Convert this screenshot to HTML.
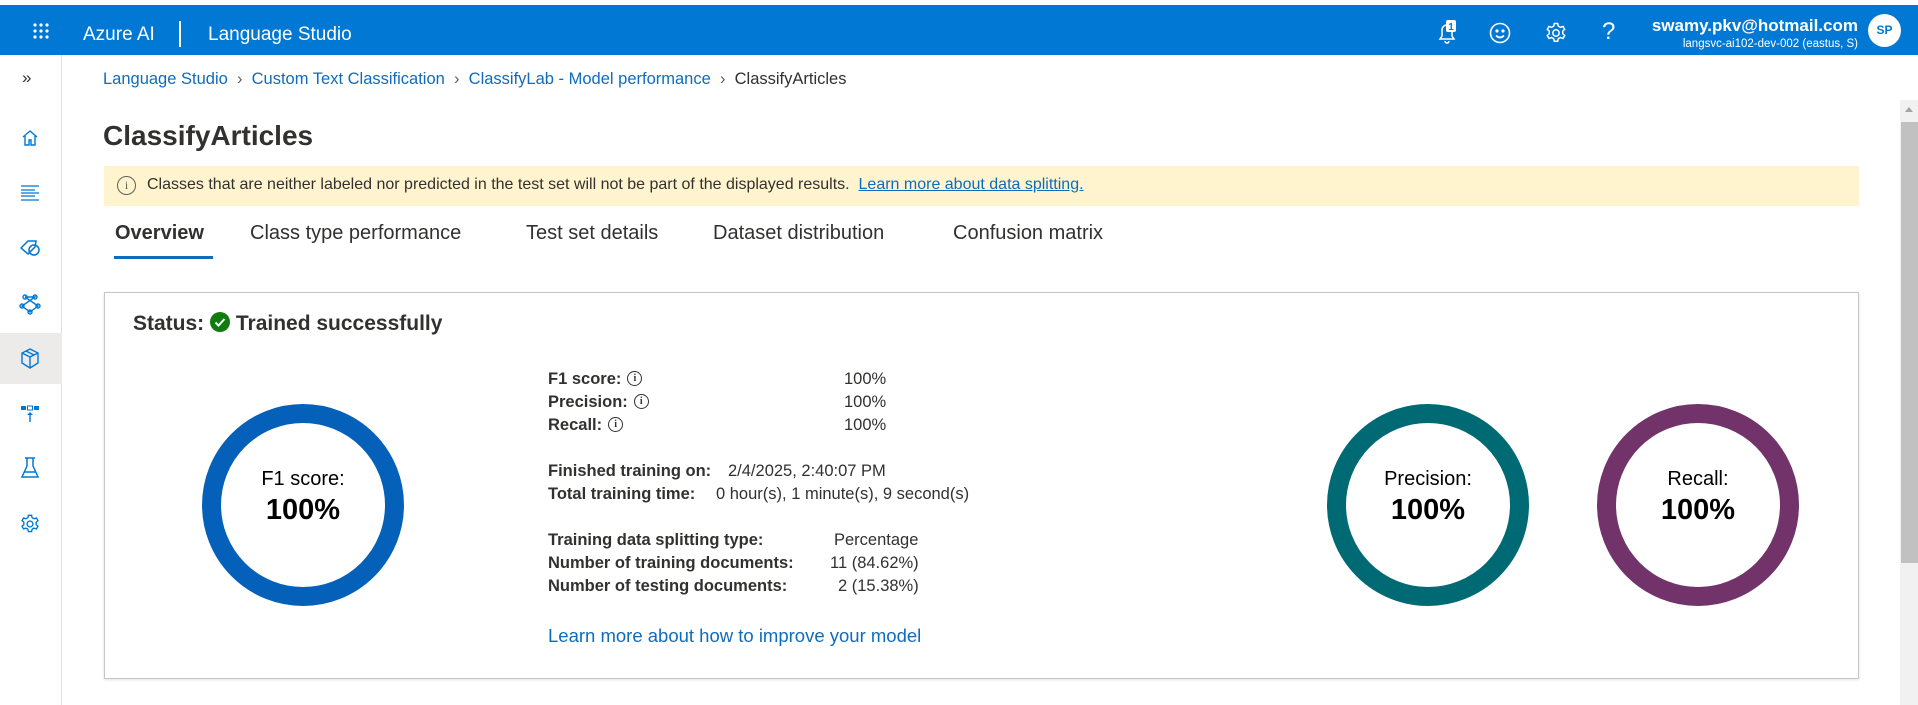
<!DOCTYPE html>
<html><head><meta charset="utf-8"><style>
*{margin:0;padding:0;box-sizing:border-box}
body{width:1918px;height:705px;overflow:hidden;background:#fff;font-family:"Liberation Sans",sans-serif;color:#323130;position:relative}
.a{position:absolute;white-space:nowrap}
.hdr{position:absolute;left:0;top:5px;width:1918px;height:50px;background:#0078d4;color:#fff}
.lnk{color:#0f6cbd}
.side{position:absolute;left:0;top:55px;width:62px;height:650px;border-right:1px solid #e1dfdd;background:#fff}
.card{position:absolute;left:104px;top:292px;width:1755px;height:387px;border:1px solid #c8c6c4;box-shadow:0 1px 3px rgba(0,0,0,.12)}
.st{font-size:16.5px;color:#323130}
.b{font-weight:bold;color:#323130}
.info{display:inline-block;width:15px;height:15px;border:1.3px solid #323130;border-radius:50%;font-size:10px;text-align:center;line-height:13px;vertical-align:3px;margin-left:6px;font-family:"Liberation Serif",serif}
.ct{text-align:center;width:200px;font-family:"Liberation Sans",sans-serif;color:#000}
</style></head><body>
<div class="hdr">
 <svg class="a" style="left:32px;top:17px" width="18" height="18" viewBox="0 0 18 18" fill="#fff"><circle cx="3" cy="3" r="1.6"/><circle cx="9" cy="3" r="1.6"/><circle cx="15" cy="3" r="1.6"/><circle cx="3" cy="9" r="1.6"/><circle cx="9" cy="9" r="1.6"/><circle cx="15" cy="9" r="1.6"/><circle cx="3" cy="15" r="1.6"/><circle cx="9" cy="15" r="1.6"/><circle cx="15" cy="15" r="1.6"/></svg>
 <div class="a" style="left:83px;top:19px;font-size:19px">Azure AI</div>
 <div class="a" style="left:179px;top:16px;width:2px;height:26px;background:#fff"></div>
 <div class="a" style="left:208px;top:19px;font-size:19px">Language Studio</div>
 <svg class="a" style="left:1434px;top:14px" width="26" height="26" viewBox="0 0 26 26" fill="none" stroke="#fff" stroke-width="1.5"><path d="M6 20h14l-2-3v-6a5 5 0 0 0-10 0v6z"/><path d="M11 22a2 2 0 0 0 4 0"/><rect x="12" y="1" width="10" height="12" rx="2" fill="#fff" stroke="none"/><text x="17" y="11" font-size="10" fill="#0078d4" stroke="none" text-anchor="middle" font-family="Liberation Sans" font-weight="bold">1</text></svg>
 <svg class="a" style="left:1488px;top:16px" width="24" height="24" viewBox="0 0 24 24" fill="none" stroke="#fff" stroke-width="1.6"><circle cx="12" cy="12" r="9.5"/><circle cx="9" cy="10" r=".8" fill="#fff"/><circle cx="15" cy="10" r=".8" fill="#fff"/><path d="M8 14.5q4 4 8 0"/></svg>
 <svg class="a" style="left:1544px;top:16px" width="24" height="24" viewBox="0 0 24 24" fill="none" stroke="#fff" stroke-width="1.5"><circle cx="12" cy="12" r="3.2"/><path d="M10.3 2.5h3.4l.6 2.6 2.2 1.2 2.5-.9 1.7 2.9-2 1.8v2.6l2 1.8-1.7 2.9-2.5-.9-2.2 1.2-.6 2.6h-3.4l-.6-2.6-2.2-1.2-2.5.9-1.7-2.9 2-1.8v-2.6l-2-1.8 1.7-2.9 2.5.9 2.2-1.2z"/></svg>
 <div class="a" style="left:1602px;top:13px;font-size:24px;font-weight:300">?</div>
 <div class="a" style="right:60px;top:11px;font-size:17px;font-weight:bold;text-align:right">swamy.pkv@hotmail.com</div>
 <div class="a" style="right:60px;top:33px;font-size:11.5px;text-align:right">langsvc-ai102-dev-002 (eastus, S)</div>
 <div class="a" style="left:1868px;top:9px;width:33px;height:33px;border-radius:50%;background:#fff;color:#0078d4;font-size:12px;font-weight:bold;text-align:center;line-height:33px">SP</div>
</div>
<div class="side">
 <div class="a" style="left:22px;top:13px;font-size:17px;color:#323130">»</div>
 <svg class="a" style="left:20px;top:73px" width="20" height="20" viewBox="0 0 20 20" fill="none" stroke="#0078d4" stroke-width="1.4"><path d="M3 9l7-6 7 6M5 8v9h4v-5h2v5h4V8"/></svg>
 <svg class="a" style="left:20px;top:128px" width="20" height="20" viewBox="0 0 20 20" stroke="#0078d4" stroke-width="1.3"><path d="M1 3h18M1 7h14M1 10h18M1 13h14M1 17h18"/></svg>
 <svg class="a" style="left:19px;top:183px" width="22" height="20" viewBox="0 0 22 20" fill="none" stroke="#0078d4" stroke-width="1.5"><path d="M2 10l7-7h8l-1 6-7 7z"/><circle cx="15" cy="12" r="5"/></svg>
 <svg class="a" style="left:19px;top:238px" width="22" height="22" viewBox="0 0 22 22" fill="none" stroke="#0078d4" stroke-width="1.4"><circle cx="6" cy="4" r="2"/><circle cx="16" cy="4" r="2"/><circle cx="3" cy="13" r="2"/><circle cx="19" cy="13" r="2"/><circle cx="11" cy="19" r="2"/><path d="M6 4h10L3 13l8 6 8-6L6 4"/></svg>
 <div class="a" style="left:0;top:278px;width:62px;height:51px;background:#edebe9"></div>
 <svg class="a" style="left:20px;top:293px" width="20" height="21" viewBox="0 0 20 21" fill="none" stroke="#0078d4" stroke-width="1.4"><path d="M10 1l8 4v10l-8 5-8-5V5z"/><path d="M2 5l8 4 8-4M10 9v11M6 3l8 4"/></svg>
 <svg class="a" style="left:20px;top:350px" width="20" height="18" viewBox="0 0 20 18" fill="#0078d4"><rect x="1" y="1" width="5" height="4"/><rect x="7.5" y="1" width="5" height="4" fill="none" stroke="#0078d4"/><rect x="14" y="1" width="5" height="4"/><path d="M10 7l-3 3h2.3v7h1.4v-7H13z"/></svg>
 <svg class="a" style="left:20px;top:402px" width="20" height="22" viewBox="0 0 20 22" fill="none" stroke="#0078d4" stroke-width="1.5"><path d="M5 1h10M7 1v8L2 20h16L13 9V1M4.5 15h11"/></svg>
 <svg class="a" style="left:19px;top:458px" width="22" height="22" viewBox="0 0 24 24" fill="none" stroke="#0078d4" stroke-width="1.5"><circle cx="12" cy="12" r="3.2"/><path d="M10.3 2.5h3.4l.6 2.6 2.2 1.2 2.5-.9 1.7 2.9-2 1.8v2.6l2 1.8-1.7 2.9-2.5-.9-2.2 1.2-.6 2.6h-3.4l-.6-2.6-2.2-1.2-2.5.9-1.7-2.9 2-1.8v-2.6l-2-1.8 1.7-2.9 2.5.9 2.2-1.2z"/></svg>
</div>
<div class="a lnk" style="left:103px;top:70px;font-size:16.5px">Language Studio <span style="color:#605e5c">&nbsp;›&nbsp;</span> Custom Text Classification <span style="color:#605e5c">&nbsp;›&nbsp;</span> ClassifyLab - Model performance <span style="color:#605e5c">&nbsp;›&nbsp;</span> <span style="color:#323130">ClassifyArticles</span></div>
<div class="a" style="left:103px;top:120px;font-size:28px;font-weight:bold;color:#323130">ClassifyArticles</div>
<div class="a" style="left:104px;top:166px;width:1755px;height:40px;background:#fff4ce"></div>
<div class="a" style="left:117px;top:176px;width:19px;height:19px;border:1.2px solid #605e5c;border-radius:50%;font-size:12px;line-height:17px;text-align:center;color:#605e5c;font-family:'Liberation Serif',serif">i</div>
<div class="a" style="left:147px;top:176px;font-size:16px;color:#323130">Classes that are neither labeled nor predicted in the test set will not be part of the displayed results. &nbsp;<span style="color:#0f6cbd;text-decoration:underline">Learn more about data splitting.</span></div>
<div class="a" style="left:115px;top:222px;font-size:20px;color:#323130;font-weight:bold">Overview</div>
<div class="a" style="left:114px;top:256px;width:99px;height:3px;background:#0f6cbd"></div>
<div class="a" style="left:250px;top:222px;font-size:20px">Class type performance</div>
<div class="a" style="left:526px;top:222px;font-size:20px">Test set details</div>
<div class="a" style="left:713px;top:222px;font-size:20px">Dataset distribution</div>
<div class="a" style="left:953px;top:222px;font-size:20px">Confusion matrix</div>
<div class="card"></div>
<div class="a" style="left:133px;top:312px;font-size:21px;font-weight:bold;color:#323130">Status: <svg width="20" height="20" viewBox="0 0 20 20" style="vertical-align:-2px"><circle cx="10" cy="10" r="10" fill="#107c10"/><path d="M5.5 10.5l3 3 6-6.5" stroke="#fff" stroke-width="2" fill="none"/></svg> Trained successfully</div>
<svg class="a" style="left:0;top:0" width="1918" height="705"><g fill="none" stroke-width="19"><circle cx="303" cy="505" r="91.5" stroke="#0560b9"/><circle cx="1428" cy="505" r="91.5" stroke="#006a74"/><circle cx="1698" cy="505" r="91.5" stroke="#71336a"/></g></svg>
<div class="a ct" style="left:203px;top:468px;font-size:20px">F1 score:</div>
<div class="a ct" style="left:203px;top:494px;font-size:29px;font-weight:bold">100%</div>
<div class="a ct" style="left:1328px;top:468px;font-size:20px">Precision:</div>
<div class="a ct" style="left:1328px;top:494px;font-size:29px;font-weight:bold">100%</div>
<div class="a ct" style="left:1598px;top:468px;font-size:20px">Recall:</div>
<div class="a ct" style="left:1598px;top:494px;font-size:29px;font-weight:bold">100%</div>
<div class="a st b" style="left:548px;top:370px">F1 score:<span class="info">i</span></div>
<div class="a st b" style="left:548px;top:393px">Precision:<span class="info">i</span></div>
<div class="a st b" style="left:548px;top:416px">Recall:<span class="info">i</span></div>
<div class="a st" style="left:844px;top:370px">100%</div>
<div class="a st" style="left:844px;top:393px">100%</div>
<div class="a st" style="left:844px;top:416px">100%</div>
<div class="a st b" style="left:548px;top:462px">Finished training on:</div>
<div class="a st" style="left:728px;top:462px">2/4/2025, 2:40:07 PM</div>
<div class="a st b" style="left:548px;top:485px">Total training time:</div>
<div class="a st" style="left:716px;top:485px">0 hour(s), 1 minute(s), 9 second(s)</div>
<div class="a st b" style="left:548px;top:531px">Training data splitting type:</div>
<div class="a st" style="left:834px;top:531px">Percentage</div>
<div class="a st b" style="left:548px;top:554px">Number of training documents:</div>
<div class="a st" style="left:830px;top:554px">11 (84.62%)</div>
<div class="a st b" style="left:548px;top:577px">Number of testing documents:</div>
<div class="a st" style="left:838px;top:577px">2 (15.38%)</div>
<div class="a" style="left:548px;top:625px;font-size:18.5px;color:#0f6cbd">Learn more about how to improve your model</div>
<div class="a" style="left:1900px;top:100px;width:18px;height:605px;background:#f1f1f1"></div>
<div class="a" style="left:1901px;top:122px;width:17px;height:441px;background:#c1c1c1"></div>
<div class="a" style="left:1905px;top:107px;width:0;height:0;border-left:4px solid transparent;border-right:4px solid transparent;border-bottom:5px solid #a3a3a3"></div>
</body></html>
